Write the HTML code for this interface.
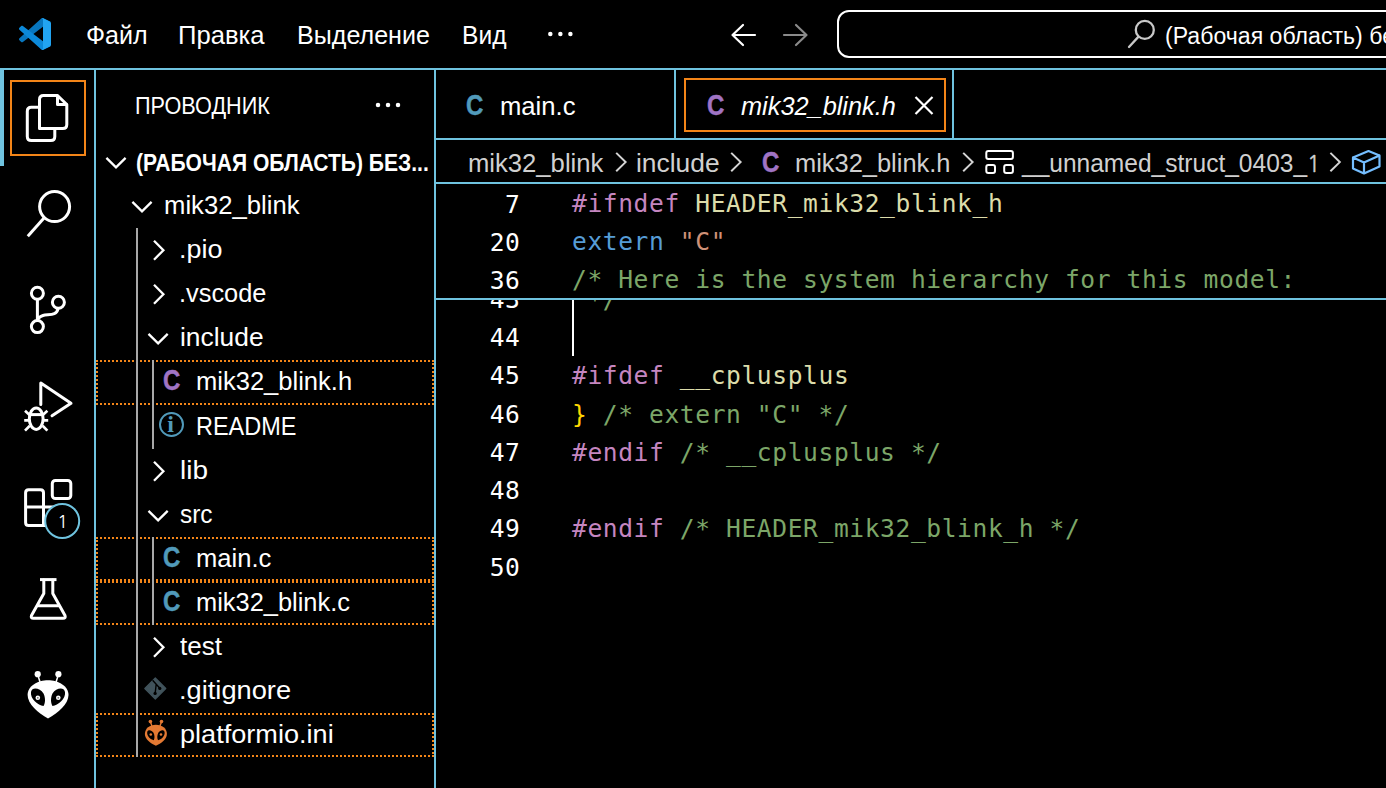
<!DOCTYPE html>
<html lang="ru">
<head>
<meta charset="utf-8">
<title>mik32_blink.h - Visual Studio Code</title>
<style>
html,body{margin:0;padding:0;background:#000;}
body{width:1386px;height:788px;overflow:hidden;position:relative;font-family:'Liberation Sans', sans-serif;color:#fff;}
#app{position:absolute;left:0;top:0;width:1386px;height:788px;overflow:hidden;background:#000;}
#app div,#app span,#app svg{position:absolute;box-sizing:border-box;}
.b{background:#6FC3DF;}
.o{border:2px solid #F38518;}
.dot{left:96px;width:338px;height:44px;border:2px dotted #F38518;}
.g{background:#a8a8a8;width:2px;}
.t{white-space:pre;line-height:40px;height:40px;color:#fff;}
.m,.ln,.cl{font-family:'DejaVu Sans Mono', 'Liberation Mono', monospace;}
.ln,.cl{font-size:24.6px;line-height:38px;height:38px;white-space:pre;letter-spacing:0.5975px;margin-top:1.5px;}
.ln{left:436px;width:84.5px;text-align:right;color:#fff;}
.cl{left:572px;color:#fff;}
.clip43{left:436px;top:300px;width:950px;height:17px;overflow:hidden;}
.clip43 .ln{left:0;}
.clip43 .cl{left:136px;}
#app .cl span,#app .t span{position:static;}
</style>
</head>
<body>
<div id="app">
<!-- frame -->
<div class="b" style="left:0;top:68px;width:1386px;height:2px"></div>
<div class="b" style="left:94px;top:70px;width:2px;height:718px"></div>
<div class="b" style="left:0;top:70px;width:4px;height:96px"></div>
<div class="b" style="left:434px;top:70px;width:2px;height:718px"></div>
<div class="b" style="left:436px;top:138px;width:950px;height:2px"></div>
<div class="b" style="left:674px;top:70px;width:2px;height:68px"></div>
<div class="b" style="left:952px;top:70px;width:2px;height:68px"></div>
<div class="b" style="left:436px;top:182px;width:950px;height:2px"></div>
<div class="b" style="left:436px;top:298px;width:950px;height:2px"></div>
<div class="o" style="left:10px;top:80px;width:76px;height:76px"></div>
<div class="o" style="left:684px;top:78px;width:262px;height:54px"></div>
<div style="left:837px;top:10px;width:620px;height:48px;border:2px solid #fff;border-radius:12px"></div>
<!-- explorer rows -->
<div class="dot" style="top:360px;height:45px"></div>
<div class="dot" style="top:537px"></div>
<div class="dot" style="top:581px"></div>
<div class="dot" style="top:713px"></div>
<div class="g" style="left:136px;top:228px;height:529px"></div>
<div class="g" style="left:152px;top:360px;height:89px"></div>
<div class="g" style="left:152px;top:537px;height:88px"></div>
<!-- cursor -->
<div style="left:572px;top:300px;width:2px;height:56px;background:#fff"></div>
<!-- icons -->
<svg width="1386" height="788" viewBox="0 0 1386 788" style="left:0;top:0" fill="none" stroke-linecap="round" stroke-linejoin="round">
<!-- vscode logo -->
<g transform="translate(19,18) scale(0.32)" stroke="none">
<path fill="#0876BE" d="M96.46 10.8L75.86 0.88C73.47 -0.27 70.62 0.21 68.75 2.08L1.3 63.58C-0.52 65.24 -0.51 68.09 1.3 69.75L6.81 74.75C8.3 76.1 10.53 76.2 12.13 74.99L93.36 13.37C96.09 11.3 100 13.25 100 16.67V16.43C100 14.03 98.62 11.84 96.46 10.8Z"/>
<path fill="#0C89D9" d="M96.46 89.2L75.86 99.12C73.47 100.27 70.62 99.79 68.75 97.92L1.3 36.42C-0.52 34.76 -0.51 31.91 1.3 30.25L6.81 25.25C8.3 23.9 10.53 23.8 12.13 25.01L93.36 86.63C96.09 88.7 100 86.75 100 83.33V83.57C100 85.97 98.62 88.16 96.46 89.2Z"/>
<path fill="#22A4F1" d="M75.86 99.13C73.47 100.27 70.62 99.79 68.75 97.92C71.06 100.22 75 98.59 75 95.33V4.67C75 1.41 71.06 -0.22 68.75 2.08C70.62 0.21 73.47 -0.27 75.86 0.87L96.46 10.78C98.62 11.82 100 14.01 100 16.41V83.59C100 85.99 98.62 88.18 96.46 89.22L75.86 99.13Z"/>
</g>
<!-- menu ellipsis -->
<g fill="#fff" stroke="none"><circle cx="550.3" cy="34" r="2.25"/><circle cx="560.35" cy="34" r="2.25"/><circle cx="570.4" cy="34" r="2.25"/></g>
<!-- sidebar ellipsis -->
<g fill="#fff" stroke="none"><circle cx="378" cy="105" r="2.25"/><circle cx="388" cy="105" r="2.25"/><circle cx="398" cy="105" r="2.25"/></g>
<!-- nav arrows -->
<path stroke="#fff" stroke-width="2.2" d="M755 35H733M743 25L732.5 35L743 45"/>
<path stroke="#8a8a8a" stroke-width="2.2" d="M784 35H806M796 25L806.5 35L796 45"/>
<!-- command center search -->
<g stroke="#c8c8c8" stroke-width="2.3"><circle cx="1144.8" cy="29.9" r="9"/><path d="M1138.3 36.9L1129 47"/></g>
<!-- activity: files -->
<g stroke="#fff" stroke-width="3">
<path d="M39.5 128.5V99.5Q39.5 95.5 43.5 95.5H57.5L66.8 104.5V124.5Q66.8 128.5 62.8 128.5Z"/>
<path d="M57.5 96V104.5H66.5"/>
<path d="M38.5 107.3H31.3Q27.3 107.3 27.3 111.3V136.5Q27.3 140.5 31.3 140.5H50.8Q54.8 140.5 54.8 136.5V130"/>
</g>
<!-- activity: search -->
<g stroke="#fff" stroke-width="3"><circle cx="54.6" cy="206.6" r="15"/><path d="M44 218L27.8 236.3" stroke-linecap="butt"/></g>
<!-- activity: scm -->
<g stroke="#fff" stroke-width="3"><circle cx="37.4" cy="293.3" r="6"/><circle cx="37.4" cy="326.6" r="6"/><circle cx="58.4" cy="302.3" r="6"/>
<path d="M37.4 299.5V320.5M58 308.5C57 316 48 314 43 315.5C39 317 37.6 319 37.4 320.5"/></g>
<!-- activity: debug -->
<g stroke="#fff" stroke-width="3">
<path d="M40.8 404.5V383L71 403.3L52 415.8"/>
<ellipse cx="36.2" cy="418.7" rx="6.9" ry="10.7"/>
<path d="M30 414.6H42.4" stroke-linecap="butt"/>
<path d="M24.2 420.3H29.3M43.1 420.3H48.2M25 410.8L29.6 415M47.4 410.8L42.8 415M25 430.6L29.8 425.8M47.4 430.6L42.6 425.8" stroke-width="2.7" stroke-linecap="butt"/>
</g>
<!-- activity: extensions -->
<g stroke="#fff" stroke-width="3">
<path d="M25.6 492.7Q25.6 489.7 28.6 489.7H40.5Q43.5 489.7 43.5 492.7V525.5H28.6Q25.6 525.5 25.6 522.5ZM25.6 507H62M43.5 525.5H62"/>
<rect x="52.3" y="480.5" width="18.5" height="18" rx="3"/>
</g>
<circle cx="62.2" cy="521" r="17" fill="#000" stroke="#6FC3DF" stroke-width="2"/>
<!-- activity: beaker -->
<g stroke="#fff" stroke-width="3">
<path d="M40 579.6H56.5" stroke-linecap="butt"/>
<path d="M43.8 580V593.5L31.5 615.5Q30.5 618.3 33.5 618.3H63Q66 618.3 65 615.5L52.8 593.5V580"/>
<path d="M38.5 605.8H58.5"/>
</g>
<!-- activity: platformio -->
<g stroke="none" fill="#fff">
<circle cx="37.7" cy="674.2" r="3.1"/><circle cx="58.4" cy="674.2" r="3.1"/>
<path d="M37.2 675.5L39.5 683L41 682.5L38.6 675Z M58.9 675.5L56.6 683L55.1 682.5L57.5 675Z"/>
<path d="M48 680.3C58 680.3 68.5 686 68.5 695C68.5 704 58 713 48 718.6C38 713 27.6 704 27.6 695C27.6 686 38 680.3 48 680.3Z"/>
<path fill="#000" d="M31 692C32 686.5 40 688 43.5 693.5C45.5 697.5 45.5 703 43.5 706C38 705 30 699 31 692Z M65 692C64 686.5 56 688 52.5 693.5C50.5 697.5 50.5 703 52.5 706C58 705 66 699 65 692Z"/>
<circle cx="37.8" cy="697.8" r="2.3"/><circle cx="58.3" cy="697.8" r="2.3"/>
<circle cx="37.8" cy="697.8" r="0.9" fill="#777"/><circle cx="58.3" cy="697.8" r="0.9" fill="#777"/>
</g>
<!-- breadcrumb chevrons -->
<g stroke="#d4d4d4" stroke-width="2" stroke-linecap="butt" stroke-linejoin="miter">
<path d="M616.2 152.9L625.6 162.1L616.2 171.3"/>
<path d="M731.2 152.9L740.6 162.1L731.2 171.3"/>
<path d="M963.2 152.9L972.6 162.1L963.2 171.3"/>
<path d="M1330.4 152.9L1339.8 162.1L1330.4 171.3"/>
</g>
<!-- tab close -->
<path stroke="#fff" stroke-width="2.2" stroke-linecap="butt" d="M915.5 97L932.5 114M932.5 97L915.5 114"/>
<!-- breadcrumb struct icon -->
<g stroke="#fff" stroke-width="2">
<rect x="986.3" y="151.1" width="26.6" height="7.9" rx="2"/>
<rect x="986.3" y="165" width="8.7" height="8.1" rx="2"/>
<rect x="1004.2" y="165" width="8.7" height="8.1" rx="2"/>
</g>
<!-- breadcrumb cube icon -->
<g stroke="#75BEFF" stroke-width="2.2">
<path d="M1353 157.5L1368.5 151L1379.5 155.5V166.5L1364 173.5L1353 168.5ZM1353 157.5L1364 162.5L1379.5 155.5M1364 162.5V173.5"/>
</g>
<!-- README info icon -->
<g stroke="#519ABA" stroke-width="2"><circle cx="171.5" cy="424.5" r="11.5"/></g>
<!-- gitignore icon -->
<g stroke="none">
<path fill="#41535B" d="M155.3 678L165.8 688.5L155.3 699L144.8 688.5Z" stroke="#41535B" stroke-width="1.2"/>
<g stroke="#000" stroke-width="1.4" fill="none" stroke-linecap="butt"><path d="M152.6 680.2L159.6 688M156.2 684.2L155.2 693"/></g>
<g fill="#000"><circle cx="159.8" cy="688.4" r="1.6"/><circle cx="155.1" cy="693.4" r="1.6"/></g>
</g>
<!-- platformio.ini icon -->
<g stroke="none" fill="#E37933">
<circle cx="150.4" cy="721.6" r="1.8"/><circle cx="161.5" cy="721.6" r="1.8"/>
<path d="M149.8 722L151.3 726.5L152.7 726L151 721.6Z M162.1 722L160.6 726.5L159.2 726L160.9 721.6Z"/>
<path d="M155.9 724.8C162 724.8 166.9 728.5 166.9 734C166.9 739.5 161 743.5 155.9 745.7C150.8 743.5 144.9 739.5 144.9 734C144.9 728.5 149.8 724.8 155.9 724.8Z"/>
<path fill="#000" d="M147.2 732.3C147.7 729.3 151.6 729.8 153.5 732.8C154.8 735.2 154.8 738.4 153.8 740.2C150.6 739.7 146.7 736 147.2 732.3Z M164.6 732.3C164.1 729.3 160.2 729.8 158.3 732.8C157 735.2 157 738.4 158 740.2C161.2 739.7 165.1 736 164.6 732.3Z"/>
<circle cx="150.8" cy="734.5" r="1.3"/><circle cx="161" cy="734.5" r="1.3"/>
</g>
</svg>

<svg width="1386" height="788" viewBox="0 0 1386 788" style="left:0;top:0" fill="none" stroke="#fff" stroke-width="2.3">
<path d="M106.4 157.9L116.0 167.3L125.6 157.9"/>
<path d="M132.4 201.9L142.0 211.3L151.6 201.9"/>
<path d="M154.0 240.7L163.4 250.2L154.0 259.7"/>
<path d="M154.0 284.7L163.4 294.2L154.0 303.7"/>
<path d="M148.5 333.9L158.1 343.3L167.7 333.9"/>
<path d="M154.0 461.7L163.4 471.2L154.0 480.7"/>
<path d="M148.5 510.9L158.1 520.3L167.7 510.9"/>
<path d="M154.0 637.7L163.4 647.2L154.0 656.7"/>
</svg>
<!-- text -->
<span class="t" style="left:85.70px;top:15px;font-size:25px;letter-spacing:0.000px;transform:scale(1.0017,1);transform-origin:0 29px;">Файл</span>
<span class="t" style="left:178.45px;top:15px;font-size:25px;letter-spacing:0.000px;transform:scale(1.0241,1);transform-origin:0 29px;">Правка</span>
<span class="t" style="left:297.29px;top:15px;font-size:25px;letter-spacing:0.000px;transform:scale(1.0031,1);transform-origin:0 29px;">Выделение</span>
<span class="t" style="left:461.73px;top:15px;font-size:25px;letter-spacing:0.000px;transform:scale(0.9837,1);transform-origin:0 29px;">Вид</span>
<span class="t" style="left:1165.42px;top:16px;font-size:23.5px;letter-spacing:0.000px;transform:scale(0.9829,1);transform-origin:0 28px;">(Рабочая область) без названия</span>
<span class="t" style="left:135.15px;top:86px;font-size:23.4px;letter-spacing:0.000px;transform:scale(0.9250,1);transform-origin:0 28px;">ПРОВОДНИК</span>
<span class="t" style="left:136.10px;top:143px;font-size:23.3px;letter-spacing:0.000px;font-weight:bold;transform:scale(0.9037,1);transform-origin:0 28px;">(РАБОЧАЯ ОБЛАСТЬ) БЕЗ...</span>
<span class="t" style="left:164.17px;top:185px;font-size:25px;letter-spacing:0.000px;transform:scale(1.0267,1);transform-origin:0 29px;">mik32_blink</span>
<span class="t" style="left:178.65px;top:229px;font-size:25px;letter-spacing:0.000px;transform:scale(1.0763,1);transform-origin:0 29px;">.pio</span>
<span class="t" style="left:178.77px;top:273px;font-size:25px;letter-spacing:0.000px;transform:scale(1.0145,1);transform-origin:0 29px;">.vscode</span>
<span class="t" style="left:180.25px;top:317px;font-size:25px;letter-spacing:0.000px;transform:scale(1.0545,1);transform-origin:0 29px;">include</span>
<span class="t" style="left:195.68px;top:361px;font-size:25px;letter-spacing:0.000px;transform:scale(1.0212,1);transform-origin:0 29px;">mik32_blink.h</span>
<span class="t" style="left:196.32px;top:406px;font-size:25px;letter-spacing:0.000px;transform:scale(0.9385,1);transform-origin:0 29px;">README</span>
<span class="t" style="left:180.18px;top:450px;font-size:25px;letter-spacing:0.000px;transform:scale(1.1174,1);transform-origin:0 29px;">lib</span>
<span class="t" style="left:179.83px;top:494px;font-size:25px;letter-spacing:0.000px;transform:scale(0.9750,1);transform-origin:0 29px;">src</span>
<span class="t" style="left:195.68px;top:538px;font-size:25px;letter-spacing:0.000px;transform:scale(1.0222,1);transform-origin:0 29px;">main.c</span>
<span class="t" style="left:195.68px;top:582px;font-size:25px;letter-spacing:0.000px;transform:scale(1.0167,1);transform-origin:0 29px;">mik32_blink.c</span>
<span class="t" style="left:180.00px;top:626px;font-size:25px;letter-spacing:0.000px;transform:scale(1.0425,1);transform-origin:0 29px;">test</span>
<span class="t" style="left:178.82px;top:670px;font-size:25px;letter-spacing:0.000px;transform:scale(1.0900,1);transform-origin:0 29px;">.gitignore</span>
<span class="t" style="left:179.92px;top:714px;font-size:25px;letter-spacing:0.000px;transform:scale(1.0842,1);transform-origin:0 29px;">platformio.ini</span>
<span class="t" style="left:499.68px;top:86px;font-size:25px;letter-spacing:0.000px;transform:scale(1.0250,1);transform-origin:0 29px;">main.c</span>
<span class="t" style="left:740.50px;top:86px;font-size:25px;letter-spacing:0.000px;font-style:italic;transform:scale(1.0132,1);transform-origin:0 29px;">mik32_blink.h</span>
<span class="t" style="left:468.27px;top:143px;font-size:25px;letter-spacing:0.000px;color:#d0d0d0;transform:scale(1.0252,1);transform-origin:0 29px;">mik32_blink</span>
<span class="t" style="left:635.95px;top:143px;font-size:25px;letter-spacing:0.000px;color:#d0d0d0;transform:scale(1.0545,1);transform-origin:0 29px;">include</span>
<span class="t" style="left:795.48px;top:143px;font-size:25px;letter-spacing:0.000px;color:#d0d0d0;transform:scale(1.0172,1);transform-origin:0 29px;">mik32_blink.h</span>
<span class="t" style="left:1022.28px;top:143px;font-size:25px;letter-spacing:0.000px;color:#d0d0d0;transform:scale(0.9813,1);transform-origin:0 29px;">__unnamed_struct_0403_<span style="font-family:NanumGothic,sans-serif;font-size:0.9em;-webkit-text-stroke:0.35px #d0d0d0">1</span></span>
<span class="t" style="left:57.30px;top:502px;font-size:18px;letter-spacing:0.000px;font-family:'NanumGothic', 'Liberation Sans', sans-serif;">1</span>
<span class="t" style="left:162.80px;top:360px;font-size:30px;letter-spacing:0.000px;font-weight:bold;color:#A074C4;transform:scale(0.8000,1);transform-origin:0 30px;-webkit-text-stroke:0.5px #A074C4;">C</span>
<span class="t" style="left:162.80px;top:537px;font-size:30px;letter-spacing:0.000px;font-weight:bold;color:#519ABA;transform:scale(0.8000,1);transform-origin:0 30px;-webkit-text-stroke:0.5px #519ABA;">C</span>
<span class="t" style="left:162.80px;top:581px;font-size:30px;letter-spacing:0.000px;font-weight:bold;color:#519ABA;transform:scale(0.8000,1);transform-origin:0 30px;-webkit-text-stroke:0.5px #519ABA;">C</span>
<span class="t" style="left:466.20px;top:85px;font-size:30px;letter-spacing:0.000px;font-weight:bold;color:#519ABA;transform:scale(0.8000,1);transform-origin:0 30px;-webkit-text-stroke:0.5px #519ABA;">C</span>
<span class="t" style="left:707.00px;top:85px;font-size:30px;letter-spacing:0.000px;font-weight:bold;color:#A074C4;transform:scale(0.8000,1);transform-origin:0 30px;-webkit-text-stroke:0.5px #A074C4;">C</span>
<span class="t" style="left:761.50px;top:142px;font-size:30px;letter-spacing:0.000px;font-weight:bold;color:#A074C4;transform:scale(0.8000,1);transform-origin:0 30px;-webkit-text-stroke:0.5px #A074C4;">C</span>
<span class="t" style="left:167.30px;top:404px;font-size:24px;letter-spacing:0.000px;font-weight:bold;color:#519ABA;font-family:'Liberation Serif', serif;">i</span>
<!-- code -->
<div class="clip43"><span class="ln" style="top:-21px">43</span><span class="cl" style="top:-21px"><span style="color:#7CA668"> */</span></span></div>
<span class="ln" style="top:184px">7</span>
<span class="cl" style="top:183px"><span style="color:#C586C0">#ifndef</span> <span style="color:#DCDCAA">HEADER_mik32_blink_h</span></span>
<span class="ln" style="top:222px">20</span>
<span class="cl" style="top:221px"><span style="color:#569CD6">extern</span> <span style="color:#CE9178">&quot;C&quot;</span></span>
<span class="ln" style="top:260px">36</span>
<span class="cl" style="top:259px"><span style="color:#7CA668">/* Here is the system hierarchy for this model:</span></span>
<span class="ln" style="top:317px">44</span>
<span class="ln" style="top:355.5px">45</span>
<span class="cl" style="top:355.5px"><span style="color:#C586C0">#ifdef</span> <span style="color:#DCDCAA">__cplusplus</span></span>
<span class="ln" style="top:394px">46</span>
<span class="cl" style="top:394px"><span style="color:#FFD700">}</span> <span style="color:#7CA668">/* extern &quot;C&quot; */</span></span>
<span class="ln" style="top:432px">47</span>
<span class="cl" style="top:432px"><span style="color:#C586C0">#endif</span> <span style="color:#7CA668">/* __cplusplus */</span></span>
<span class="ln" style="top:470px">48</span>
<span class="ln" style="top:508px">49</span>
<span class="cl" style="top:508px"><span style="color:#C586C0">#endif</span> <span style="color:#7CA668">/* HEADER_mik32_blink_h */</span></span>
<span class="ln" style="top:547px">50</span>
</div>
</body>
</html>
